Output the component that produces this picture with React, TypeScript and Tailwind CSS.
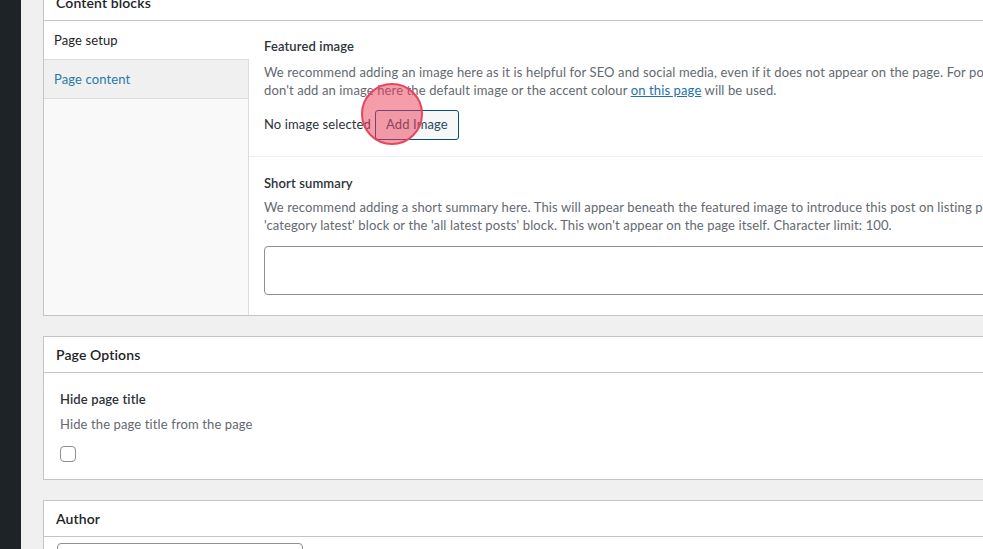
import React from "react";

const font = { fontFamily: "Lato, 'Liberation Sans', sans-serif" };

export default function App() {
  return (
    <div
      className="relative w-[983px] h-[549px] overflow-hidden flex bg-[#f0f0f1] text-[13px] tracking-[0.12px] text-[#1d2327]"
      style={font}
    >
      <div className="w-[21px] shrink-0 bg-[#1d2327]" />
      <div className="pl-[22px] flex flex-col w-[1400px] shrink-0">
        {/* Content blocks */}
        <div className="mt-[-16px] border border-[#c3c4c7] bg-white">
          <div className="h-[36px] px-[12px] flex items-center border-b border-[#c3c4c7] text-[14px] font-semibold">
            Content blocks
          </div>
          <div className="flex">
            <div className="w-[205px] shrink-0 flex flex-col bg-[#f9f9f9]">
              <div className="h-[39px] bg-white border-b border-[#dcdcde] pl-[10px] pt-[1px] flex items-center">
                Page setup
              </div>
              <div className="h-[39px] bg-[#f0f0f1] border-b border-r border-[#dcdcde] pl-[10px] pt-[1px] flex items-center text-[#2a78a8]">
                Page content
              </div>
              <div className="flex-1 border-r border-[#dcdcde]" />
            </div>
            <div className="flex-1 flex flex-col">
              <div className="pl-[15px] pt-[15px] pb-[16px] border-b border-[#f0f0f1]">
                <div className="h-[20px] leading-[20px] font-semibold text-[#2c3338]">Featured image</div>
                <div className="mt-[7px] leading-[18px] text-[#646970] whitespace-nowrap">
                  <div>
                    We recommend adding an image here as it is helpful for SEO and social media, even if it does not appear on the page. For posts, if you
                  </div>
                  <div>
                    don't add an image here the default image or the accent colour{" "}
                    <span className="text-[#2271b1] underline">on this page</span> will be used.
                  </div>
                </div>
                <div className="mt-[11px] flex items-center gap-[4px]">
                  <span className="text-[#2c3338]">No image selected</span>
                  <button className="h-[30px] px-[10px] rounded-[3px] border border-[#0a4b78] bg-[#f6f7f7] text-[#2c4a63] text-[13px]">
                    Add Image
                  </button>
                </div>
              </div>
              <div className="pl-[15px] pt-[16px] pb-[20px]">
                <div className="h-[20px] leading-[20px] font-semibold text-[#2c3338]">Short summary</div>
                <div className="mt-[5px] leading-[18px] text-[#646970] whitespace-nowrap">
                  <div>
                    We recommend adding a short summary here. This will appear beneath the featured image to introduce this post on listing pages such as the
                  </div>
                  <div>
                    'category latest' block or the 'all latest posts' block. This won't appear on the page itself. Character limit: 100.
                  </div>
                </div>
                <div className="mt-[12px] h-[49px] w-[1000px] rounded-[4px] border border-[#8c8f94] bg-white" />
              </div>
            </div>
          </div>
        </div>

        {/* Page Options */}
        <div className="mt-[20px] border border-[#c3c4c7] bg-white">
          <div className="h-[36px] px-[12px] flex items-center border-b border-[#c3c4c7] text-[14px] font-semibold">
            Page Options
          </div>
          <div className="px-[16px] pt-[16px] pb-[17px]">
            <div className="h-[20px] leading-[20px] font-semibold text-[#2c3338]">Hide page title</div>
            <div className="mt-[6px] leading-[18px] text-[#646970]">Hide the page title from the page</div>
            <div className="mt-[13px] w-[16px] h-[16px] rounded-[4px] border border-[#8c8f94] bg-white" />
          </div>
        </div>

        {/* Author */}
        <div className="mt-[20px] border border-[#c3c4c7] bg-white">
          <div className="h-[36px] px-[12px] flex items-center border-b border-[#c3c4c7] text-[14px] font-semibold">
            Author
          </div>
          <div className="px-[13px] pt-[6px] pb-[12px]">
            <div className="h-[30px] w-[246px] rounded-[4px] border border-[#8c8f94] bg-white" />
          </div>
        </div>
      </div>

      {/* click indicator */}
      <div className="absolute left-[361px] top-[83px] w-[62px] h-[62px] rounded-full bg-[rgba(236,60,88,0.5)] border-2 border-[#e5465f]" />
    </div>
  );
}
